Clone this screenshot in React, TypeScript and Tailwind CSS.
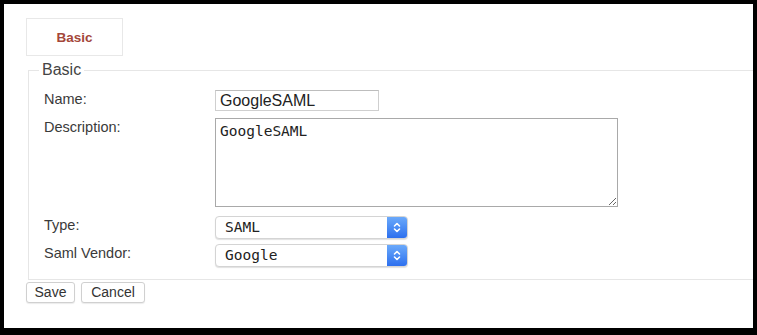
import React from 'react';

const sans = 'font-["Liberation_Sans",Arial,sans-serif]';
const mono = 'font-["DejaVu_Sans_Mono","Liberation_Mono",monospace]';

// Mac-style select: white field with a blue stepper on the right
const MacSelect = ({ value, options }: { value: string; options: string[] }) => (
  <div className="flex h-[23px] w-[193px] rounded-[4px] border border-[#d4d4d4] bg-white shadow-[0_1px_1px_rgba(0,0,0,0.12)] overflow-hidden">
    <select
      defaultValue={value}
      className={`${mono} flex-1 appearance-none bg-transparent pl-[9px] text-[14.5px] leading-[21px] text-[#222] outline-none`}
    >
      {options.map(o => (
        <option key={o} value={o}>{o}</option>
      ))}
    </select>
    <span className="flex w-[20px] items-center justify-center bg-gradient-to-b from-[#6ba9fa] to-[#2d6fee]">
      <svg width="10" height="13" viewBox="0 0 10 13" fill="none" stroke="white" strokeWidth={1.6} strokeLinecap="round" strokeLinejoin="round">
        <path d="M2.5 5 L5 2.5 L7.5 5" />
        <path d="M2.5 8 L5 10.5 L7.5 8" />
      </svg>
    </span>
  </div>
);

export default function App() {
  return (
    <div className={`${sans} h-[335px] w-[757px] bg-black pt-[4px] pl-[4px] pr-[4px] pb-[7px]`}>
      <div className="flex h-full flex-col bg-white">
        {/* tab */}
        <div className="ml-[22px] mt-[14px] flex h-[38px] w-[97px] items-center justify-center border border-[#e8e8e8] pt-[3px] text-[13.5px] font-bold text-[#a4473a]">
          Basic
        </div>

        <fieldset className="ml-[24px] mt-[5px] w-[725px] border border-r-0 border-[#e6e6e6] pt-[11px] pb-[12px]">
          <legend className="ml-[10px] px-[3px] text-[16px] leading-[18px] text-[#444]">Basic</legend>

          <div className="grid grid-cols-[171px_1fr] items-start pl-[15px] text-[14.5px] leading-[17px] text-[#3a3a3a]">
            <label className="pt-[1px]">Name:</label>
            <input
              type="text"
              defaultValue="GoogleSAML"
              className="h-[21px] w-[164px] border border-[#cfcfcf] border-t-[#bdbdbd] pl-[4px] text-[16px] leading-[19px] text-[#222] outline-none"
            />

            <label className="mt-[7px] pt-[1px]">Description:</label>
            <textarea
              defaultValue="GoogleSAML"
              className={`${mono} mt-[7px] h-[89px] w-[403px] border border-[#a9a9a9] px-[4px] pt-[4px] text-[14.5px] leading-[17px] text-[#222] outline-none`}
            />

            <label className="mt-[9px] pt-[1px]">Type:</label>
            <div className="mt-[9px]">
              <MacSelect value="SAML" options={['SAML', 'LDAP']} />
            </div>

            <label className="mt-[5px] pt-[1px]">Saml Vendor:</label>
            <div className="mt-[5px]">
              <MacSelect value="Google" options={['Google', 'Okta']} />
            </div>
          </div>
        </fieldset>

        <div className="ml-[22px] mt-[2px] flex gap-[6px]">
          <button className="h-[21px] w-[49px] rounded-[3px] border border-[#d0d0d0] bg-white text-[14px] leading-[19px] text-[#333] shadow-[0_1px_1px_rgba(0,0,0,0.08)]">
            Save
          </button>
          <button className="h-[21px] w-[64px] rounded-[3px] border border-[#d0d0d0] bg-white text-[14px] leading-[19px] text-[#333] shadow-[0_1px_1px_rgba(0,0,0,0.08)]">
            Cancel
          </button>
        </div>
      </div>
    </div>
  );
}
